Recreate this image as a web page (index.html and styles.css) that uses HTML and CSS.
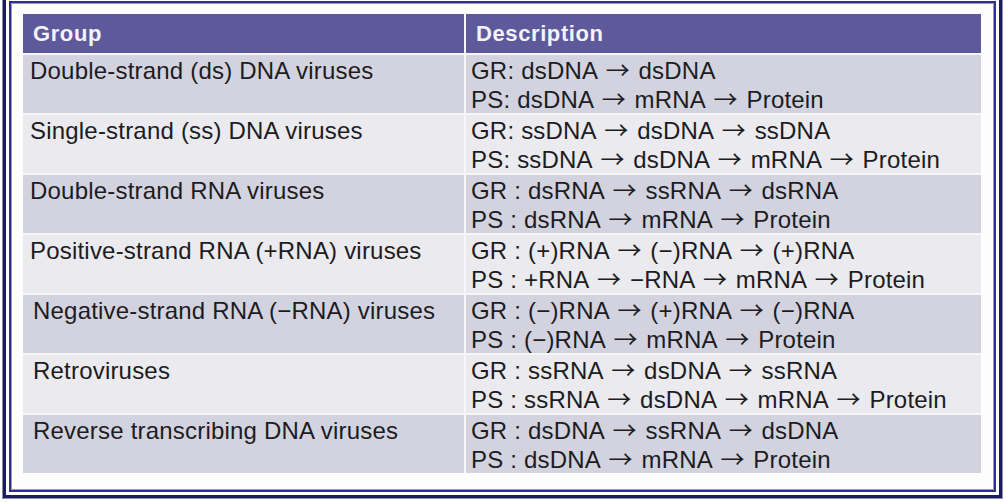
FILE: index.html
```html
<!DOCTYPE html>
<html>
<head>
<meta charset="utf-8">
<link rel="stylesheet" href="styles.css">
</head>
<body>
<div class="frame">
 <div class="frame-navy">
  <div class="frame-navy2">
   <div class="frame-inner">
    <div class="vtable">
     <div class="hcell hgroup">Group</div>
     <div class="hcell hdesc">Description</div>

     <div class="cell group dark">Double-strand (ds) DNA viruses</div>
     <div class="cell desc dark">GR: dsDNA <span class="ar">→</span> dsDNA<br>PS: dsDNA <span class="ar">→</span> mRNA <span class="ar">→</span> Protein</div>

     <div class="cell group light">Single-strand (ss) DNA viruses</div>
     <div class="cell desc light">GR: ssDNA <span class="ar">→</span> dsDNA <span class="ar">→</span> ssDNA<br>PS: ssDNA <span class="ar">→</span> dsDNA <span class="ar">→</span> mRNA <span class="ar">→</span> Protein</div>

     <div class="cell group dark">Double-strand RNA viruses</div>
     <div class="cell desc dark">GR : dsRNA <span class="ar">→</span> ssRNA <span class="ar">→</span> dsRNA<br>PS : dsRNA <span class="ar">→</span> mRNA <span class="ar">→</span> Protein</div>

     <div class="cell group light">Positive-strand RNA (+RNA) viruses</div>
     <div class="cell desc light">GR : (+)RNA <span class="ar">→</span> (−)RNA <span class="ar">→</span> (+)RNA<br>PS : +RNA <span class="ar">→</span> −RNA <span class="ar">→</span> mRNA <span class="ar">→</span> Protein</div>

     <div class="cell group indent dark">Negative-strand RNA (−RNA) viruses</div>
     <div class="cell desc dark">GR : (−)RNA <span class="ar">→</span> (+)RNA <span class="ar">→</span> (−)RNA<br>PS : (−)RNA <span class="ar">→</span> mRNA <span class="ar">→</span> Protein</div>

     <div class="cell group indent light">Retroviruses</div>
     <div class="cell desc light">GR : ssRNA <span class="ar">→</span> dsDNA <span class="ar">→</span> ssRNA<br>PS : ssRNA <span class="ar">→</span> dsDNA <span class="ar">→</span> mRNA <span class="ar">→</span> Protein</div>

     <div class="cell group indent dark">Reverse transcribing DNA viruses</div>
     <div class="cell desc dark">GR : dsDNA <span class="ar">→</span> ssRNA <span class="ar">→</span> dsDNA<br>PS : dsDNA <span class="ar">→</span> mRNA <span class="ar">→</span> Protein</div>
    </div>
   </div>
  </div>
 </div>
</div>
</body>
</html>
```
FILE: styles.css
```css
html, body {
  margin: 0;
  padding: 0;
  background: #ffffff;
  overflow: hidden;
}
body {
  width: 1006px;
  height: 502px;
  font-family: "Liberation Sans", Arial, sans-serif;
}
.frame {
  margin: -6px 3px 0 2px;
  border: 1px solid #8c8ca4;
}
.frame-navy {
  border: 3px solid #1b1b62;
  padding: 3px;
  background: #ffffff;
}
.frame-navy2 {
  border: 2px solid #2e2e8c;
}
.frame-inner {
  border: 1px solid #9a9aae;
  background: #fdfdfd;
  padding: 10px 12px 16px 11px;
}
.vtable {
  display: grid;
  grid-template-columns: 441px 1fr;
  grid-template-rows: 39px repeat(7, 58px);
  gap: 2px;
  background: #f7f7f9;
}
.hcell {
  background: #5d599b;
  color: #f3f3f8;
  font-weight: bold;
  font-size: 22px;
  letter-spacing: 0.6px;
  display: flex;
  align-items: center;
  padding-top: 1px;
}
.hgroup { padding-left: 10px; }
.hdesc { padding-left: 10px; }
.cell {
  font-size: 24px;
  letter-spacing: 0.2px;
  line-height: 29px;
  color: #1c1c22;
  padding-top: 1px;
  white-space: nowrap;
}
.ar {
  font-family: "Noto Sans CJK JP", "Noto Sans CJK SC", sans-serif;
  font-size: 24px;
  font-weight: 400;
  line-height: 20px;
  letter-spacing: 0;
  margin: 0 2px;
}
.group { padding-left: 7px; }
.group.indent { padding-left: 10px; }
.desc { padding-left: 5px; }
.dark { background: #d3d3df; }
.light { background: #eaeaef; }
```
